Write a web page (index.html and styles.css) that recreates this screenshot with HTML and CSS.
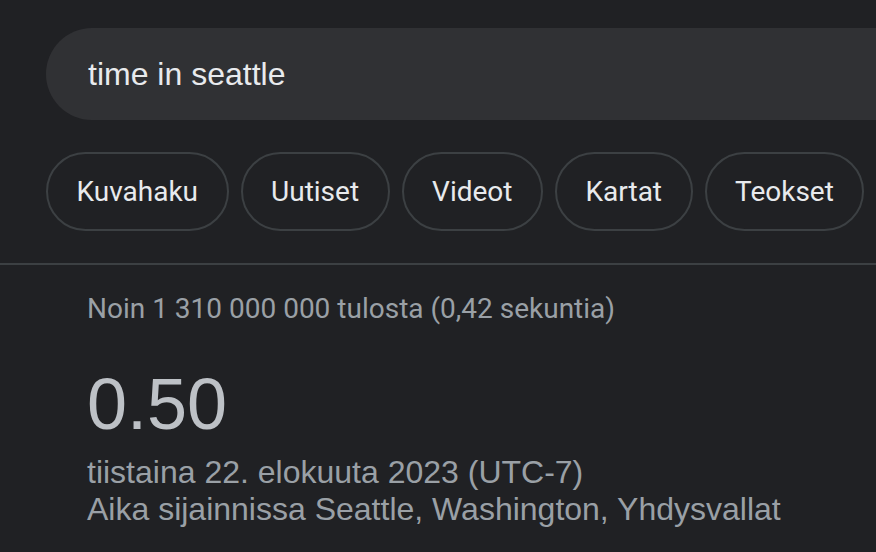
FILE: index.html
```html
<!DOCTYPE html>
<html lang="fi">
<head>
<meta charset="utf-8">
<title>time in seattle</title>
<link rel="stylesheet" href="styles.css">
</head>
<body>
<div class="page">
  <div class="search">
    <span class="query">time in seattle</span>
  </div>
  <div class="chips">
    <span class="chip">Kuvahaku</span>
    <span class="chip">Uutiset</span>
    <span class="chip">Videot</span>
    <span class="chip">Kartat</span>
    <span class="chip">Teokset</span>
  </div>
  <div class="divider"></div>
  <div class="results">
    <div class="stats">Noin 1 310 000 000 tulosta (0,42 sekuntia)</div>
    <div class="time">0.50</div>
    <div class="date">tiistaina 22. elokuuta 2023 (UTC-7)</div>
    <div class="place">Aika sijainnissa Seattle, Washington, Yhdysvallat</div>
  </div>
</div>
</body>
</html>
```

FILE: styles.css
```css
html, body {
  margin: 0;
  padding: 0;
  background: #202124;
  overflow: hidden;
}
.page {
  width: 876px;
  height: 552px;
  padding-top: 28px;
  box-sizing: border-box;
  overflow: hidden;
  font-family: "Liberation Sans", Arial, sans-serif;
}
.search {
  margin-left: 46px;
  height: 92px;
  background: #303134;
  border-radius: 46px 0 0 46px;
  display: flex;
  align-items: center;
  padding-left: 42px;
  box-sizing: border-box;
}
.query {
  color: #e8eaed;
  font-size: 32px;
}
.chips {
  display: flex;
  gap: 12px;
  margin-top: 32px;
  margin-left: 46px;
  overflow: hidden;
}
.chip {
  height: 79px;
  box-sizing: border-box;
  border: 2px solid #3c4043;
  border-radius: 40px;
  padding: 0 28.5px;
  display: flex;
  align-items: center;
  color: #e8eaed;
  font-family: Roboto, "Open Sans", sans-serif;
  font-size: 28px;
  flex-shrink: 0;
}
.divider {
  height: 2px;
  background: #3c4043;
  margin-top: 32px;
}
.results {
  padding-left: 87px;
}
.stats {
  margin-top: 24px;
  color: #9aa0a6;
  font-family: Roboto, sans-serif;
  font-size: 28px;
  line-height: 40px;
}
.time {
  margin-top: 35px;
  color: #bdc1c6;
  font-size: 72px;
  line-height: 80px;
}
.date, .place {
  color: #9aa0a6;
  font-size: 32px;
  line-height: 37px;
}
.date {
  margin-top: 10px;
}
```
